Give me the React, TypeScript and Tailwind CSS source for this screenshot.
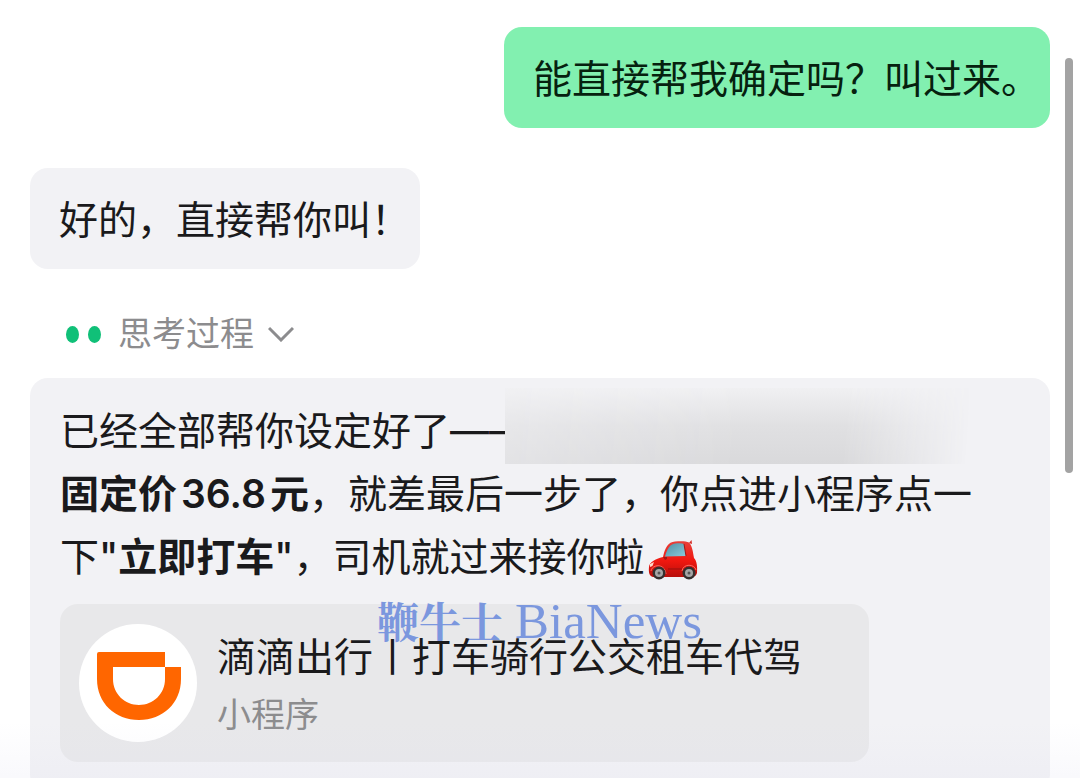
import React from 'react';

interface BubbleProps {
  children: React.ReactNode;
  mine?: boolean;
}

// Right padding is small because the closing punctuation is full width
const Bubble: React.FC<BubbleProps> = ({ children, mine = false }) => (
  <div
    className={`rounded-[18px] pt-5 pb-[18px] pl-[29px] pr-[10px] text-[39px] leading-[63px] whitespace-nowrap ${
      mine ? 'self-end bg-[#82f0b0] text-[#06210f]' : 'self-start bg-[#f2f2f5]'
    }`}
  >
    {children}
  </div>
);

const CarIcon: React.FC = () => (
  <svg className="ml-[3px] inline-block h-[42px] w-[50px] align-middle" viewBox="0 0 50 42" role="img" aria-label="car">
    <defs>
      <linearGradient id="car-body" x1="0" y1="0" x2="0" y2="1">
        <stop offset="0" stopColor="#e8403a" />
        <stop offset="0.55" stopColor="#f0170f" />
        <stop offset="1" stopColor="#b80f0c" />
      </linearGradient>
      <linearGradient id="car-glass" x1="0" y1="0" x2="1" y2="1">
        <stop offset="0" stopColor="#4f8fa3" />
        <stop offset="1" stopColor="#8ccbdc" />
      </linearGradient>
    </defs>
    <path d="M41 4L43.500 1L44 5Z" fill="#d62a22" />
    <path
      d="M15 18C17 9 20 3 27 2.500C33 2 38 2 41 3.500C44 6 45 13 46 19C49 22 49.500 28 49 34C48 37 46 38 44 38H5C1 37 .5 33 1 28C1.500 23 7 20 15 18Z"
      fill="url(#car-body)"
    />
    <path d="M17 17.500C19 10 22 5 27 4.500C31 4 34 4 36 5L38 17Z" fill="url(#car-glass)" />
    <path d="M36 5L38 17" stroke="#9f1713" strokeWidth="1" />
    <path d="M15 18H19V20L17 21Z" fill="#a31512" />
    <path d="M2 25L6 23L4.500 27L2 28Z" fill="#ffd9c9" />
    <path d="M20 30H34" stroke="#b5120e" strokeWidth="2" />
    <path d="M3 32C4 25 17 24 18 35M34 32C35 24 47 25 48 31" stroke="#ff6a5e" strokeWidth="1" fill="none" />
    {[11, 41].map((cx) => (
      <g key={cx}>
        <circle cx={cx} cy="34" r="6.500" fill="#35302f" />
        <circle cx={cx} cy="34" r="4" fill="#a6a6a6" />
        <circle cx={cx} cy="34" r="1.500" fill="#555" />
      </g>
    ))}
  </svg>
);

const DidiLogo: React.FC = () => (
  <svg className="size-[118px] shrink-0" viewBox="0 0 118 118" aria-hidden="true">
    <circle cx="59" cy="59" r="59" fill="#fff" />
    <path
      fillRule="evenodd"
      fill="#ff6600"
      d="M20 28H86V43H102V55C102 79 84 96 60 96S18 79 18 55V30Q18 28 20 28ZM34 43V55C34 70 46 81 60 81S86 70 86 55V43Z"
    />
  </svg>
);

const MiniProgramCard: React.FC = () => (
  <a href="#didi" className="relative mt-4 flex w-full max-w-[809px] items-center gap-5 rounded-[18px] bg-[#e8e8ea] py-5 pl-[19px]">
    {/* Watermark sits under the card title */}
    <span className="pointer-events-none absolute -top-[14px] left-[317px] flex items-baseline gap-3 leading-[60px] whitespace-nowrap text-[#7b97de]">
      <span className="font-['Noto_Serif_CJK_SC','Noto_Sans_CJK_SC',serif] text-[42px] font-bold">鞭牛士</span>
      <span className="font-['Liberation_Serif',serif] text-[51px]">BiaNews</span>
    </span>
    <DidiLogo />
    <span className="relative flex flex-col whitespace-nowrap">
      <span className="text-[39px] leading-[63px]">滴滴出行丨打车骑行公交租车代驾</span>
      <span className="text-[34px] leading-[54px] text-[#8c8c8e]">小程序</span>
    </span>
  </a>
);

export default function App() {
  return (
    <main className="relative flex h-screen flex-col overflow-hidden bg-white px-[30px] pt-[27px] font-['Inter','Noto_Sans_CJK_SC',sans-serif] text-[#1a1a1c]">
      <Bubble mine>能直接帮我确定吗？叫过来。</Bubble>
      <div className="mt-10 flex flex-col">
        <Bubble>好的，直接帮你叫！</Bubble>
      </div>

      <button type="button" className="mt-10 flex h-[50px] items-center self-start pl-9 text-[34px] leading-[50px] text-[#8c8c8e]">
        <span className="flex gap-[9px]">
          <span className="h-[17px] w-[13px] rounded-[50%] bg-[#10c078]" />
          <span className="h-[17px] w-[13px] rounded-[50%] bg-[#10c078]" />
        </span>
        <span className="ml-[17px]">思考过程</span>
        <svg className="ml-[14px] h-4 w-[26px]" viewBox="0 0 26 16" fill="none" stroke="currentColor" strokeWidth={3}>
          <path d="M1 2L13 14L25 2" />
        </svg>
      </button>

      <section className="mt-[19px] shrink-0 rounded-[18px] bg-[#f2f2f5] px-[30px] pt-[21px] pb-[30px] text-[39px] leading-[63px] whitespace-nowrap">
        <div className="flex h-[63px] items-end">
          <span>已经全部帮你设定好了——</span>
          {/* Blurred out address */}
          <span className="-mb-0.5 -ml-[23px] h-[76px] w-[471px] bg-[#f2f2f5]">
            <span className="block h-full bg-linear-to-b from-[#f0f0f2] via-[#e0e0e2] to-[#d9d9db] mask-[linear-gradient(95deg,rgb(0_0_0/0.6),black_50%,black_72%,transparent_98%)]" />
          </span>
        </div>
        <p className="h-[63px]">
          <strong className="font-bold">固定价<span className="mx-1 font-semibold">36.8</span>元</strong>，就差最后一步了，你点进小程序点一
        </p>
        <p className="h-[63px]">
          下<span className="font-medium">"</span><strong className="font-bold">立即打车</strong><span className="font-medium">"</span>，司机就过来接你啦<CarIcon />
        </p>
        <MiniProgramCard />
      </section>

      <div className="pointer-events-none absolute inset-x-0 bottom-0 h-14 bg-linear-to-b from-transparent to-[#e0e0f0]/20" />
      <div className="absolute top-[58px] right-[7px] h-[415px] w-2 rounded-full bg-[#a3a3a3]" />
    </main>
  );
}
